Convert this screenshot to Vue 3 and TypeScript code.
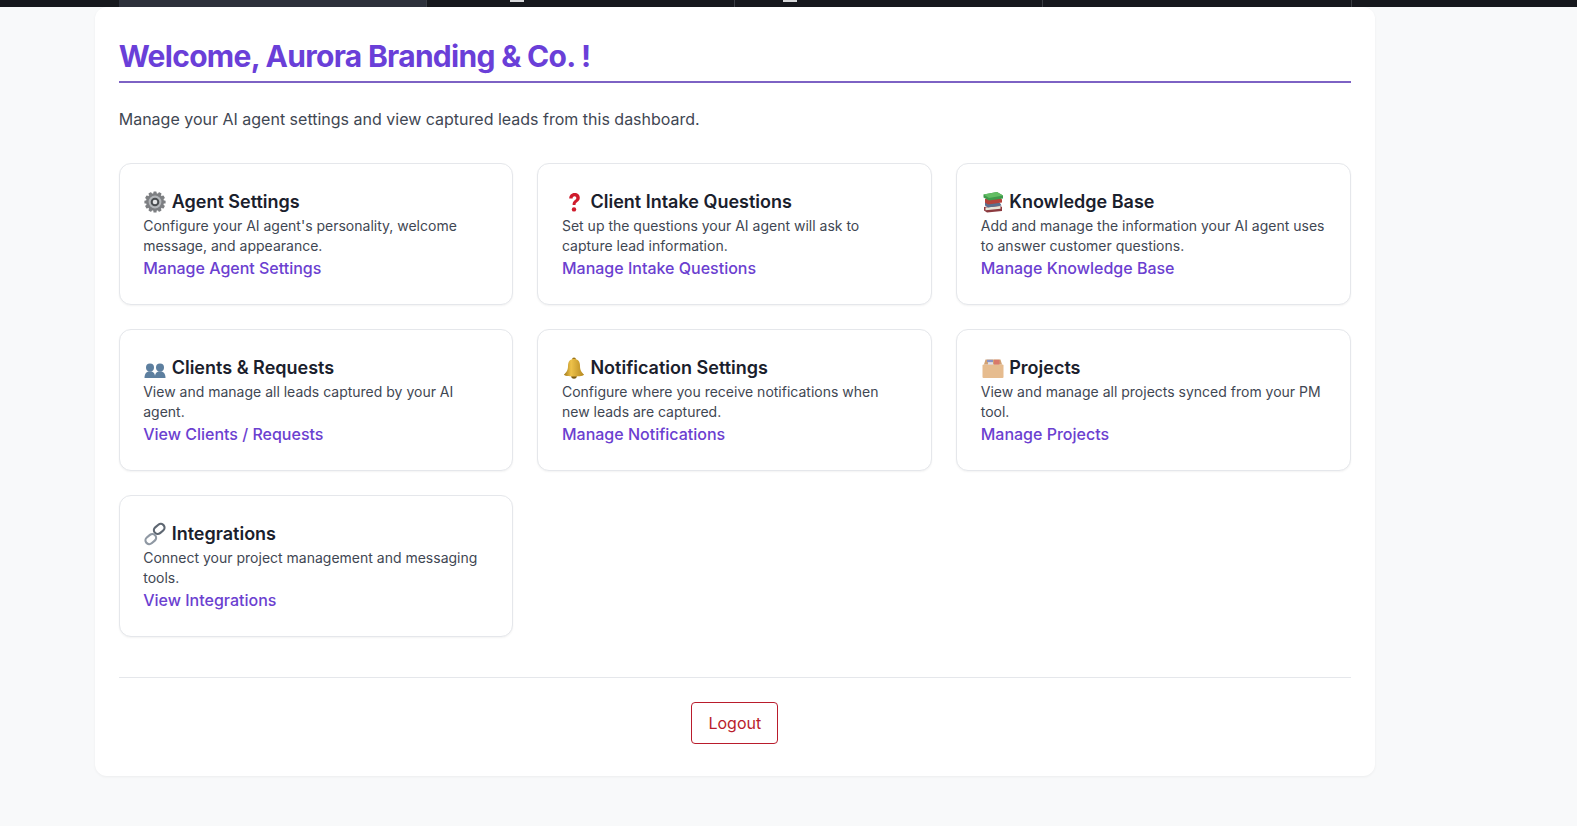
<script setup lang="ts">
interface Card {
  icon: string
  title: string
  desc: string
  link: string
}

const tabs: boolean[] = [true, false, false, false]
const cards: Card[] = [
  { icon: 'gear', title: 'Agent Settings', desc: "Configure your AI agent's personality, welcome message, and appearance.", link: 'Manage Agent Settings' },
  { icon: 'question', title: 'Client Intake Questions', desc: 'Set up the questions your AI agent will ask to capture lead information.', link: 'Manage Intake Questions' },
  { icon: 'books', title: 'Knowledge Base', desc: 'Add and manage the information your AI agent uses to answer customer questions.', link: 'Manage Knowledge Base' },
  { icon: 'people', title: 'Clients & Requests', desc: 'View and manage all leads captured by your AI agent.', link: 'View Clients / Requests' },
  { icon: 'bell', title: 'Notification Settings', desc: 'Configure where you receive notifications when new leads are captured.', link: 'Manage Notifications' },
  { icon: 'box', title: 'Projects', desc: 'View and manage all projects synced from your PM tool.', link: 'Manage Projects' },
  { icon: 'link', title: 'Integrations', desc: 'Connect your project management and messaging tools.', link: 'View Integrations' },
]
</script>

<template>
  <div class="page">
    <nav class="topbar">
      <div class="tabs">
        <div v-for="(active, i) in tabs" :key="i" class="tab" :class="{ active }">
          <span v-if="i === 1 || i === 2" class="tab-icon" :class="`tab-icon-${i}`"></span>
        </div>
      </div>
    </nav>
    <main class="panel">
      <h1 class="welcome">Welcome, Aurora Branding &amp; Co. !</h1>
      <p class="intro">Manage your AI agent settings and view captured leads from this dashboard.</p>
      <section class="grid">
        <article v-for="card in cards" :key="card.title" class="card">
          <h3 class="card-title">
            <svg class="emoji" viewBox="0 0 24 24" aria-hidden="true">
              <template v-if="card.icon === 'gear'">
                <g fill="#7d7f82">
                  <circle cx="12" cy="12" r="9" />
                  <rect x="10.400" y="1.400" width="3.200" height="21.200" rx=".6" />
                  <rect x="10.400" y="1.400" width="3.200" height="21.200" rx=".6" transform="rotate(30 12 12)" />
                  <rect x="10.400" y="1.400" width="3.200" height="21.200" rx=".6" transform="rotate(60 12 12)" />
                  <rect x="10.400" y="1.400" width="3.200" height="21.200" rx=".6" transform="rotate(90 12 12)" />
                  <rect x="10.400" y="1.400" width="3.200" height="21.200" rx=".6" transform="rotate(120 12 12)" />
                  <rect x="10.400" y="1.400" width="3.200" height="21.200" rx=".6" transform="rotate(150 12 12)" />
                </g>
                <circle cx="12" cy="12" r="6.400" fill="#b3b6b9" />
                <circle cx="12" cy="12" r="4.300" fill="#4a4d50" />
                <circle cx="12" cy="12" r="2.300" fill="#e4e5e6" />
              </template>
              <template v-else-if="card.icon === 'question'">
                <path d="M7.200 8.600C7.200 5.400 9.400 3 12.600 3c3.100 0 5.200 2 5.200 4.700 0 2.100-1.100 3.300-2.600 4.400-1.200.9-1.700 1.500-1.700 3H10.600c-.1-2.400.6-3.700 2.100-4.800 1-.8 1.600-1.300 1.600-2.300 0-1-.7-1.700-1.800-1.700-1.200 0-1.900.9-1.900 2.300z" fill="#cf1b2c" />
                <circle cx="12" cy="19.400" r="2.200" fill="#cf1b2c" />
              </template>
              <template v-else-if="card.icon === 'books'">
                <path d="M3 17l15-2 3 2v4l-15 1.500-3-2z" fill="#8c3a3f" />
                <path d="M4.500 17.600l15-1.500v2.600l-15 1.600z" fill="#e9e4d8" />
                <path d="M4 11.500l15 1.500 1.500 2.500-13.500 2-3-2z" fill="#5a6f8f" />
                <path d="M4 9l14-2 3 2.500v3L7 14.500l-3-2z" fill="#b5433c" />
                <path d="M2.500 4.500L16 2l6 3.500v3L8 10.500 2.500 7.500z" fill="#3f9a4c" />
                <path d="M2.500 4.500L16 2l6 3.500L8 8z" fill="#63bd63" />
              </template>
              <template v-else-if="card.icon === 'people'">
                <g fill="#5d7f9f">
                  <circle cx="7" cy="11.500" r="4" />
                  <path d="M1.500 22c0-4.200 2-6.700 5.500-6.700s5.200 2.500 5.200 6.700z" />
                  <circle cx="17" cy="11.500" r="4" />
                  <path d="M11.800 22c0-4.200 1.700-6.700 5.200-6.700s5.500 2.500 5.500 6.700z" />
                </g>
              </template>
              <template v-else-if="card.icon === 'bell'">
                <defs>
                  <linearGradient id="bellfill" x1="0" x2="1">
                    <stop offset="0" stop-color="#a17a1c" />
                    <stop offset=".35" stop-color="#eec24a" />
                    <stop offset="1" stop-color="#b5881f" />
                  </linearGradient>
                </defs>
                <circle cx="12" cy="20" r="2.800" fill="#7b5a14" />
                <circle cx="12" cy="3.400" r="2" fill="#9d7516" />
                <path d="M12 3c-4 0-6 2.600-6 7 0 4.300-1.500 6.200-4 8.500 0 1.300 4.200 2 10 2s10-.7 10-2c-2.500-2.300-4-4.200-4-8.500 0-4.400-2-7-6-7z" fill="url(#bellfill)" />
              </template>
              <template v-else-if="card.icon === 'box'">
                <rect x="1.500" y="8.500" width="21" height="13.500" rx="1" fill="#e6bc8f" />
                <path d="M3 8.500L4.500 3.500h15L21 8.500z" fill="#d2a273" />
                <rect x="6" y="3.800" width="6" height="2.400" fill="#8a93c4" />
                <rect x="7" y="6.200" width="5" height="2.300" fill="#dfe0ea" />
                <rect x="13" y="3.800" width="5.500" height="4.700" fill="#d9796a" />
              </template>
              <template v-else>
                <g fill="none" stroke-linecap="round">
                  <rect x="10.500" y="3.200" width="11.500" height="7.500" rx="3.700" transform="rotate(-40 16.200 7)" stroke="#5e6772" stroke-width="2.200" />
                  <rect x="2" y="13.300" width="11.500" height="7.500" rx="3.700" transform="rotate(-40 7.800 17)" stroke="#8f98a3" stroke-width="2.200" />
                </g>
              </template>
            </svg>
            <span>{{ card.title }}</span>
          </h3>
          <p class="card-desc">{{ card.desc }}</p>
          <a class="card-link" href="#">{{ card.link }}</a>
        </article>
      </section>
      <footer class="panel-foot">
        <button class="logout" type="button">Logout</button>
      </footer>
    </main>
  </div>
</template>

<style>
html, body {
  margin: 0;
  background: #f8f9fa;
}
</style>

<style scoped>
.page {
  font-family: Inter, "Noto Sans", sans-serif;
  background: #f8f9fa;
  min-height: 826px;
  box-sizing: border-box;
}
.topbar {
  height: 7px;
  background: #16181d;
  overflow: hidden;
}
.tabs {
  display: flex;
  width: 1233px;
  margin-left: 118.500px;
  height: 7px;
}
.tab {
  flex: 1;
  position: relative;
  border-right: 1px solid #3a3d43;
  box-sizing: border-box;
}
.tab.active {
  background: #2d313b;
}
.tab-icon {
  position: absolute;
  top: 0;
  width: 14px;
  height: 2px;
  background: #d6d7d9;
}
.tab-icon-1 {
  left: 83px;
}
.tab-icon-2 {
  left: 48px;
}
.panel {
  box-sizing: border-box;
  width: 1280px;
  margin-left: 95px;
  padding: 24px 24px 32px 23.700px;
  background: #fff;
  border-radius: 12px;
  box-shadow: 0 1px 3px rgba(0, 0, 0, 0.05);
}
.welcome {
  margin: 0 0 24px;
  padding: 6px 0;
  font-size: 30px;
  line-height: 38px;
  font-weight: 700;
  letter-spacing: -0.700px;
  color: #6a3fd8;
  border-bottom: 2px solid #7d62c4;
}
.intro {
  margin: 0 0 32px;
  font-size: 16px;
  line-height: 24px;
  color: #3f4753;
}
.grid {
  display: grid;
  grid-template-columns: repeat(3, 1fr);
  gap: 24px;
}
.card {
  padding: 24px 24px 24px 23.500px;
  background: #fff;
  border: 1px solid #e5e7eb;
  border-radius: 12px;
  box-shadow: 0 1px 2px rgba(0, 0, 0, 0.05);
}
.card-title {
  display: flex;
  align-items: center;
  gap: 4.500px;
  margin: 0;
  font-size: 18px;
  line-height: 28px;
  font-weight: 600;
  color: #1a202c;
}
.emoji {
  width: 24px;
  height: 24px;
  flex: none;
}
.card-desc {
  margin: 0;
  font-size: 14px;
  line-height: 20px;
  color: #3f4753;
}
.card-link {
  display: block;
  font-size: 16px;
  line-height: 24px;
  font-weight: 500;
  color: #6b40d0;
  text-decoration: none;
}
.panel-foot {
  margin-top: 40px;
  padding-top: 24px;
  border-top: 1px solid #e5e7eb;
  display: flex;
  justify-content: center;
}
.logout {
  font-family: inherit;
  font-size: 16px;
  line-height: 24px;
  padding: 8px 16px;
  color: #b91c2c;
  background: #fff;
  border: 1px solid #b91c2c;
  border-radius: 4px;
}
</style>
